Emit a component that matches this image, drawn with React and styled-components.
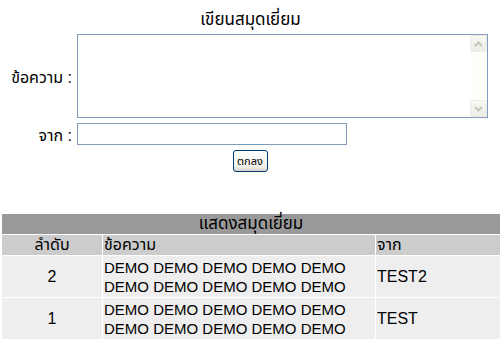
import React from 'react';
import styled, { createGlobalStyle } from 'styled-components';

// -------------- CSS -----------------

const GlobalStyle = createGlobalStyle`
    html, body {
        margin: 0;
        padding: 0;
        background: #fff;
    }
    body {
        font-family: "Liberation Sans", "Noto Sans Thai", "Loma", "Garuda", sans-serif;
        font-size: 15px;
        color: #000;
    }
`;

const Page = styled.div`
    width: 501px;
    height: 340px;
    overflow: hidden;
`;

const Form = styled.div`
    display: grid;
    grid-template-columns: 72px 1fr;
    column-gap: 5px;
    row-gap: 5px;
    padding-top: 10px;
`;

const Title = styled.div`
    grid-column: 1 / -1;
    text-align: center;
    font-size: 17px;
    line-height: 20px;
    height: 19px;
`;

const Label = styled.label`
    display: flex;
    align-items: center;
    justify-content: flex-end;
    white-space: nowrap;
    font-size: 16px;
    line-height: 18px;
    padding-top: 3px;
`;

const MessageBox = styled.div`
    display: flex;
    width: 409px;
    height: 82px;
    border: 1px solid #7f9db9;
    background: #fff;
`;

const MessageArea = styled.textarea`
    flex: 1;
    border: none;
    outline: none;
    resize: none;
    padding: 2px;
    font: inherit;
    overflow: hidden;
`;

const ScrollBar = styled.div`
    width: 17px;
    display: flex;
    flex-direction: column;
    background: #fdfdf9;
`;

const ScrollButton = styled.div`
    height: 17px;
    box-sizing: border-box;
    border: 1px solid #eeede5;
    border-radius: 2px;
    background: linear-gradient(#f7f7f3, #eeede5);
    display: flex;
    align-items: center;
    justify-content: center;
`;

const ScrollTrack = styled.div`
    flex: 1;
`;

const NameInput = styled.input`
    display: block;
    width: 264px;
    height: 20px;
    box-sizing: content-box;
    padding: 0 2px;
    margin: 0;
    border: 1px solid #7f9db9;
    font: inherit;
    outline: none;
`;

const ButtonRow = styled.div`
    grid-column: 1 / -1;
    display: flex;
    justify-content: center;
    padding-right: 1px;
`;

const SubmitButton = styled.button`
    width: 35px;
    height: 22px;
    padding: 0;
    border: 1px solid #003c74;
    border-radius: 3px;
    background: linear-gradient(#ffffff, #f0f0ea 80%, #d6d0c5);
    font-family: inherit;
    font-size: 11px;
    line-height: 18px;
    color: #000;
`;

const GuestTable = styled.table`
    margin: 41px 0 0 1px;
    width: 500px;
    border-collapse: separate;
    border-spacing: 1px;
    table-layout: fixed;
`;

const Cell = styled.td`
    padding: 0 1px;
    background: #eeeeee;
    text-align: ${p => p.$align || 'left'};
    vertical-align: middle;
    line-height: 19px;
    height: 41px;
    font-size: ${p => (p.$big ? '16px' : '15px')};
`;

const HeadCell = styled.th`
    padding: 0 1px;
    font-weight: normal;
    background: ${p => (p.$title ? '#999999' : '#cccccc')};
    text-align: ${p => p.$align || 'left'};
    line-height: 20px;
    height: 20px;
    font-size: ${p => (p.$title ? '17px' : '16px')};
`;

// -------------- COMPONENT -----------------

const Arrow = ({ up }) => (
    <svg width="9" height="6" viewBox="0 0 9 6">
        <path
            d={up ? 'M1 5 L4.5 1.5 L8 5' : 'M1 1 L4.5 4.5 L8 1'}
            fill="none"
            stroke="#c5c5bd"
            strokeWidth="2"
        />
    </svg>
);

const entries = [
    { id: 2, text: 'DEMO DEMO DEMO DEMO DEMO DEMO DEMO DEMO DEMO DEMO', from: 'TEST2' },
    { id: 1, text: 'DEMO DEMO DEMO DEMO DEMO DEMO DEMO DEMO DEMO DEMO', from: 'TEST' }
];

export default function App() {
    return (
        <Page>
            <GlobalStyle />
            <Form>
                <Title>เขียนสมุดเยี่ยม</Title>
                <Label>ข้อความ :</Label>
                <MessageBox>
                    <MessageArea />
                    <ScrollBar>
                        <ScrollButton><Arrow up /></ScrollButton>
                        <ScrollTrack />
                        <ScrollButton><Arrow /></ScrollButton>
                    </ScrollBar>
                </MessageBox>
                <Label>จาก :</Label>
                <div><NameInput type="text" /></div>
                <ButtonRow>
                    <SubmitButton>ตกลง</SubmitButton>
                </ButtonRow>
            </Form>
            <GuestTable>
                <colgroup>
                    <col style={{ width: 100 }} />
                    <col style={{ width: 272 }} />
                    <col style={{ width: 124 }} />
                </colgroup>
                <thead>
                    <tr>
                        <HeadCell $title $align="center" colSpan={3}>แสดงสมุดเยี่ยม</HeadCell>
                    </tr>
                    <tr>
                        <HeadCell $align="center">ลำดับ</HeadCell>
                        <HeadCell>ข้อความ</HeadCell>
                        <HeadCell>จาก</HeadCell>
                    </tr>
                </thead>
                <tbody>
                    {entries.map(e => (
                        <tr key={e.id}>
                            <Cell $align="center" $big>{e.id}</Cell>
                            <Cell>{e.text}</Cell>
                            <Cell $big>{e.from}</Cell>
                        </tr>
                    ))}
                </tbody>
            </GuestTable>
        </Page>
    );
}
